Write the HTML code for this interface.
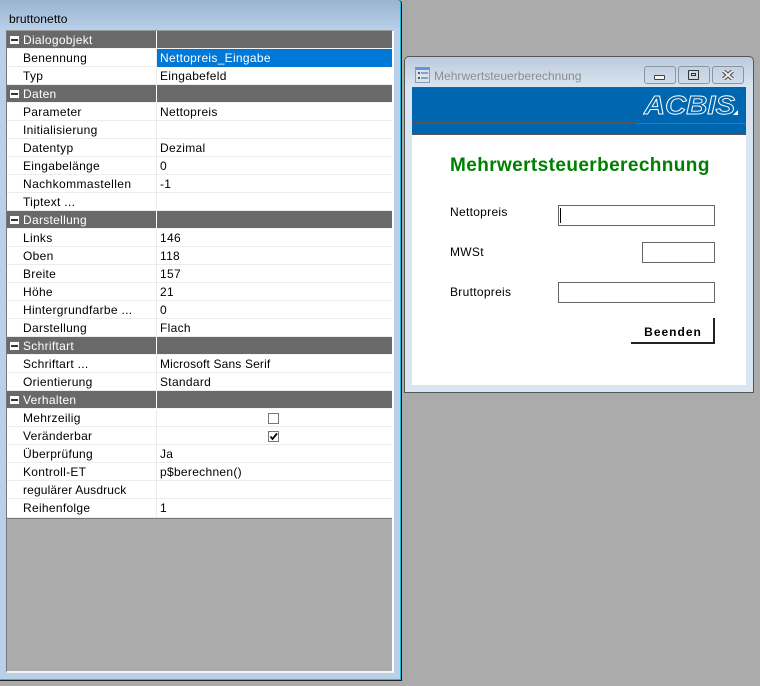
<!DOCTYPE html>
<html><head><meta charset="utf-8">
<style>
html,body{margin:0;padding:0}
body{width:760px;height:686px;background:#ababab;position:relative;overflow:hidden;font-family:"Liberation Sans",sans-serif;font-size:12px;color:#000}
div{position:absolute;box-sizing:border-box}
.t{white-space:nowrap;line-height:14px;letter-spacing:.3px}
.r{left:7px;width:385px;height:18px;background:#fff;border-bottom:1px solid #ececec}
.h{left:7px;width:385px;height:18px;background:#696969;border-bottom:1px solid #f4f4f4}
.h .t{color:#fff;left:16px;top:2px}
.r .a{left:16px;top:2px}
.r .b{left:153px;top:2px}
.s{position:absolute;left:149px;top:0;width:1px;height:18px;background:#ececec}
.h .s{background:#fff}
.m{left:3px;top:5px;width:9px;height:8px;background:#fff}
.m:after{content:"";position:absolute;left:1px;top:3px;width:7px;height:2px;background:#333}
.wb{background:linear-gradient(#c3d1e0,#d0ddea);border:1px solid #8b96a3;border-radius:3px;height:18px;top:66px}
.inp{background:#fff;border:1px solid #666}
</style></head><body>
<div style="left:0;top:0;width:402px;height:681px;background:linear-gradient(#9bb3cf 0,#b9d0ea 30px,#b9d0ea 100%);border-right:1px solid #000;border-bottom:1px solid #222;border-top-right-radius:4px"></div>
<div style="left:400px;top:2px;width:1px;height:678px;background:#19c0e0"></div>
<div style="left:0;top:679px;width:401px;height:1px;background:#19c0e0"></div>
<div class="t" style="left:9px;top:12px;letter-spacing:.1px">bruttonetto</div>
<div style="left:6px;top:30px;width:388px;height:643px;background:#ababab;border-top:1px solid #999;border-left:1px solid #777;border-right:2px solid #fff;border-bottom:2px solid #f4f4f4"></div>

<div class="h" style="top:31px"><div class="m"></div><div class="t">Dialogobjekt</div><div class="s"></div></div>
<div class="r" style="top:49px"><div class="t a">Benennung</div><div class="s"></div><div style="left:150px;top:0;width:235px;height:18px;background:#0078d7"></div><div class="t b" style="color:#fff">Nettopreis_Eingabe</div></div>
<div class="r" style="top:67px"><div class="t a">Typ</div><div class="s"></div><div class="t b">Eingabefeld</div></div>
<div class="h" style="top:85px"><div class="m"></div><div class="t">Daten</div><div class="s"></div></div>
<div class="r" style="top:103px"><div class="t a">Parameter</div><div class="s"></div><div class="t b">Nettopreis</div></div>
<div class="r" style="top:121px"><div class="t a">Initialisierung</div><div class="s"></div></div>
<div class="r" style="top:139px"><div class="t a">Datentyp</div><div class="s"></div><div class="t b">Dezimal</div></div>
<div class="r" style="top:157px"><div class="t a">Eingabelänge</div><div class="s"></div><div class="t b">0</div></div>
<div class="r" style="top:175px"><div class="t a" style="letter-spacing:.4px">Nachkommastellen</div><div class="s"></div><div class="t b">-1</div></div>
<div class="r" style="top:193px"><div class="t a">Tiptext ...</div><div class="s"></div></div>
<div class="h" style="top:211px"><div class="m"></div><div class="t">Darstellung</div><div class="s"></div></div>
<div class="r" style="top:229px"><div class="t a">Links</div><div class="s"></div><div class="t b">146</div></div>
<div class="r" style="top:247px"><div class="t a">Oben</div><div class="s"></div><div class="t b">118</div></div>
<div class="r" style="top:265px"><div class="t a">Breite</div><div class="s"></div><div class="t b">157</div></div>
<div class="r" style="top:283px"><div class="t a">Höhe</div><div class="s"></div><div class="t b">21</div></div>
<div class="r" style="top:301px"><div class="t a">Hintergrundfarbe ...</div><div class="s"></div><div class="t b">0</div></div>
<div class="r" style="top:319px"><div class="t a">Darstellung</div><div class="s"></div><div class="t b">Flach</div></div>
<div class="h" style="top:337px"><div class="m"></div><div class="t">Schriftart</div><div class="s"></div></div>
<div class="r" style="top:355px"><div class="t a">Schriftart ...</div><div class="s"></div><div class="t b" style="letter-spacing:.15px">Microsoft Sans Serif</div></div>
<div class="r" style="top:373px"><div class="t a">Orientierung</div><div class="s"></div><div class="t b">Standard</div></div>
<div class="h" style="top:391px"><div class="m"></div><div class="t">Verhalten</div><div class="s"></div></div>
<div class="r" style="top:409px"><div class="t a">Mehrzeilig</div><div class="s"></div><div style="left:261px;top:4px;width:11px;height:11px;border:1px solid #777;background:#fff"></div></div>
<div class="r" style="top:427px"><div class="t a">Veränderbar</div><div class="s"></div><div style="left:261px;top:4px;width:11px;height:11px;border:1px solid #777;background:#fff"><svg width="9" height="9" style="position:absolute;left:0;top:0"><path d="M1.5 4.5L3.5 7L8 1.5" fill="none" stroke="#000" stroke-width="1.8"/></svg></div></div>
<div class="r" style="top:445px"><div class="t a">Überprüfung</div><div class="s"></div><div class="t b">Ja</div></div>
<div class="r" style="top:463px"><div class="t a">Kontroll-ET</div><div class="s"></div><div class="t b">p$berechnen()</div></div>
<div class="r" style="top:481px"><div class="t a" style="letter-spacing:.15px">regulärer Ausdruck</div><div class="s"></div></div>
<div class="r" style="top:499px;height:19px"><div class="t a">Reihenfolge</div><div class="s" style="height:19px"></div><div class="t b">1</div></div>
<div style="left:7px;top:518px;width:385px;height:1px;background:#777"></div>

<!-- right window -->
<div style="left:404px;top:56px;width:350px;height:337px;background:linear-gradient(#bccbdc 0,#d9e5f1 31px,#d9e5f1 100%);border:1px solid #555;border-radius:5px 5px 0 0"></div>
<div style="left:415px;top:67px;width:15px;height:16px;background:#dbe3ea;border:1px solid #8a9ab5;border-top:3px solid #6f8fd8"></div>
<div style="left:418px;top:72px;width:2px;height:2px;background:#556"></div>
<div style="left:421px;top:72px;width:7px;height:2px;background:#7fa6c8"></div>
<div style="left:418px;top:77px;width:2px;height:2px;background:#556"></div>
<div style="left:421px;top:77px;width:7px;height:2px;background:#7fa6c8"></div>
<div class="t" style="left:434px;top:69px;color:#8d8d8d;letter-spacing:.03px">Mehrwertsteuerberechnung</div>
<div class="wb" style="left:644px;width:32px"></div>
<div style="left:654px;top:75px;width:11px;height:5px;background:#f4f4f4;border:1px solid #444;border-radius:1px"></div>
<div class="wb" style="left:678px;width:32px"></div>
<div style="left:688px;top:70px;width:11px;height:10px;background:#cfdbe8;border:1px solid #333;border-radius:1px"></div>
<div style="left:691px;top:73px;width:5px;height:3px;border:1px solid #333"></div>
<div class="wb" style="left:712px;width:32px"></div>
<svg style="position:absolute;left:722px;top:70px" width="12" height="10"><path d="M1.5 1L10.5 9M10.5 1L1.5 9" stroke="#444" stroke-width="4"/><path d="M1.5 1L10.5 9M10.5 1L1.5 9" stroke="#eee" stroke-width="2"/></svg>

<div style="left:412px;top:87px;width:334px;height:298px;background:#fff"></div>
<div style="left:412px;top:87px;width:334px;height:48px;background:#0066b0"></div>
<div style="left:412px;top:87px;width:224px;height:1px;background:#555"></div>
<div style="left:412px;top:122px;width:224px;height:2px;background:#555"></div>
<div style="left:636px;top:123px;width:110px;height:1px;background:#4a6f90"></div>
<div style="left:412px;top:134px;width:334px;height:1px;background:#555"></div>
<svg style="position:absolute;left:640px;top:90px" width="100" height="30">
<text x="4" y="24" textLength="91" lengthAdjust="spacingAndGlyphs" font-family="Liberation Sans" font-size="26" font-weight="bold" font-style="italic" fill="none" stroke="#fff" stroke-width=".9">ACBIS</text>
<path d="M98 25V20L93 25Z" fill="#fff"/>
</svg>

<div style="left:450px;top:154px;white-space:nowrap;font-size:19px;font-weight:bold;color:#008000;line-height:24px;letter-spacing:.4px">Mehrwertsteuerberechnung</div>
<div class="t" style="left:450px;top:205px;letter-spacing:.3px">Nettopreis</div>
<div class="inp" style="left:558px;top:205px;width:157px;height:21px"></div>
<div style="left:560px;top:208px;width:1px;height:15px;background:#000"></div>
<div class="t" style="left:450px;top:245px;letter-spacing:.3px">MWSt</div>
<div class="inp" style="left:642px;top:242px;width:73px;height:21px"></div>
<div class="t" style="left:450px;top:285px;letter-spacing:.3px">Bruttopreis</div>
<div class="inp" style="left:558px;top:282px;width:157px;height:21px"></div>
<div style="left:631px;top:318px;width:84px;height:26px;border-right:2px solid #222;border-bottom:2px solid #222"></div>
<div style="left:631px;top:325px;width:84px;text-align:center;font-weight:bold;line-height:14px;letter-spacing:1px;font-size:12px">Beenden</div>
</body></html>
